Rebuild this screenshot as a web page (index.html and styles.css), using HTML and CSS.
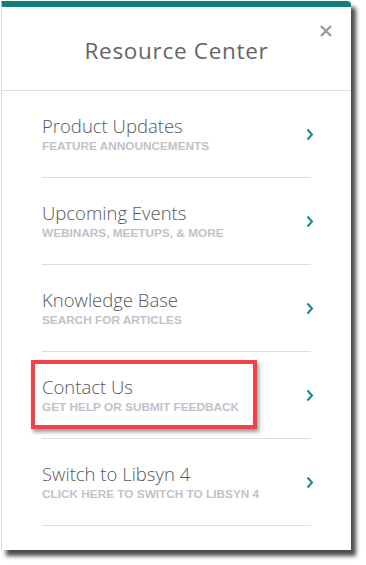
FILE: index.html
```html
<!DOCTYPE html>
<html>
<head>
<meta charset="utf-8">
<link rel="stylesheet" href="styles.css">
</head>
<body>
<div class="panel">
  <div class="header">
    <h1 class="title">Resource Center</h1>
    <svg class="close" width="12" height="12" viewBox="0 0 12 12"><path d="M1 1L11 11M11 1L1 11" stroke="#9b9b9f" stroke-width="2.4" fill="none"/></svg>
  </div>
  <ul class="list">
    <li class="item">
      <div class="text"><div class="name">Product Updates</div><div class="sub">FEATURE ANNOUNCEMENTS</div></div>
      <svg class="chev" width="8" height="13" viewBox="0 0 8 13"><path d="M1.5 1.5L6 6.5L1.5 11.5" stroke="#13898a" stroke-width="2" fill="none"/></svg>
    </li>
    <li class="item">
      <div class="text"><div class="name">Upcoming Events</div><div class="sub">WEBINARS, MEETUPS, &amp; MORE</div></div>
      <svg class="chev" width="8" height="13" viewBox="0 0 8 13"><path d="M1.5 1.5L6 6.5L1.5 11.5" stroke="#13898a" stroke-width="2" fill="none"/></svg>
    </li>
    <li class="item">
      <div class="text"><div class="name">Knowledge Base</div><div class="sub">SEARCH FOR ARTICLES</div></div>
      <svg class="chev" width="8" height="13" viewBox="0 0 8 13"><path d="M1.5 1.5L6 6.5L1.5 11.5" stroke="#13898a" stroke-width="2" fill="none"/></svg>
    </li>
    <li class="item">
      <div class="text"><div class="name">Contact Us</div><div class="sub">GET HELP OR SUBMIT FEEDBACK</div></div>
      <svg class="chev" width="8" height="13" viewBox="0 0 8 13"><path d="M1.5 1.5L6 6.5L1.5 11.5" stroke="#13898a" stroke-width="2" fill="none"/></svg>
      <div class="highlight"></div>
    </li>
    <li class="item">
      <div class="text"><div class="name">Switch to Libsyn 4</div><div class="sub">CLICK HERE TO SWITCH TO LIBSYN 4</div></div>
      <svg class="chev" width="8" height="13" viewBox="0 0 8 13"><path d="M1.5 1.5L6 6.5L1.5 11.5" stroke="#13898a" stroke-width="2" fill="none"/></svg>
    </li>
  </ul>
</div>
</body>
</html>
```
FILE: styles.css
```css
html, body {
  margin: 0;
  padding: 0;
  background: #ffffff;
}
html {
  height: 100%;
}
body {
  box-sizing: border-box;
  min-height: 565px;
  padding: 1px 0 0 1px;
  font-family: "Open Sans", "Liberation Sans", sans-serif;
}
.panel {
  width: 349px;
  height: 543px;
  background: #fff;
  border-top: 6px solid #0d8078;
  border-left: 1px solid #d8d8d8;
  border-top-right-radius: 4px;
  box-sizing: content-box;
  box-shadow: 5px 6px 4px rgba(0, 0, 0, 0.7);
  position: relative;
}
.header {
  height: 83px;
  border-bottom: 1px solid #dcdce2;
  display: flex;
  align-items: center;
  justify-content: center;
  position: relative;
}
.title {
  margin: 3px 0 0 0;
  font-size: 22.5px;
  font-weight: 400;
  color: #636468;
  letter-spacing: 0.7px;
}
.close {
  position: absolute;
  right: 19px;
  top: 18px;
}
.list {
  list-style: none;
  margin: 0 40px;
  padding: 0;
}
.item {
  height: 86px;
  border-bottom: 1px solid #dcdce2;
  display: flex;
  align-items: center;
  justify-content: space-between;
  position: relative;
}
.text {
  display: flex;
  flex-direction: column;
}
.name {
  font-size: 18.5px;
  line-height: 20px;
  color: #55565a;
  font-weight: 300;
}
.sub {
  font-family: "Liberation Sans", Arial, sans-serif;
  font-size: 11.8px;
  line-height: 14px;
  font-weight: 700;
  color: #c1c2c9;
  margin-top: 3px;
}
.chev {
  margin-right: -3px;
}
.highlight {
  position: absolute;
  left: -11px;
  top: 8px;
  width: 218px;
  height: 61px;
  border: 4px solid #f2434a;
  box-shadow: 2px 3px 4px rgba(0, 0, 0, 0.4);
}
```
